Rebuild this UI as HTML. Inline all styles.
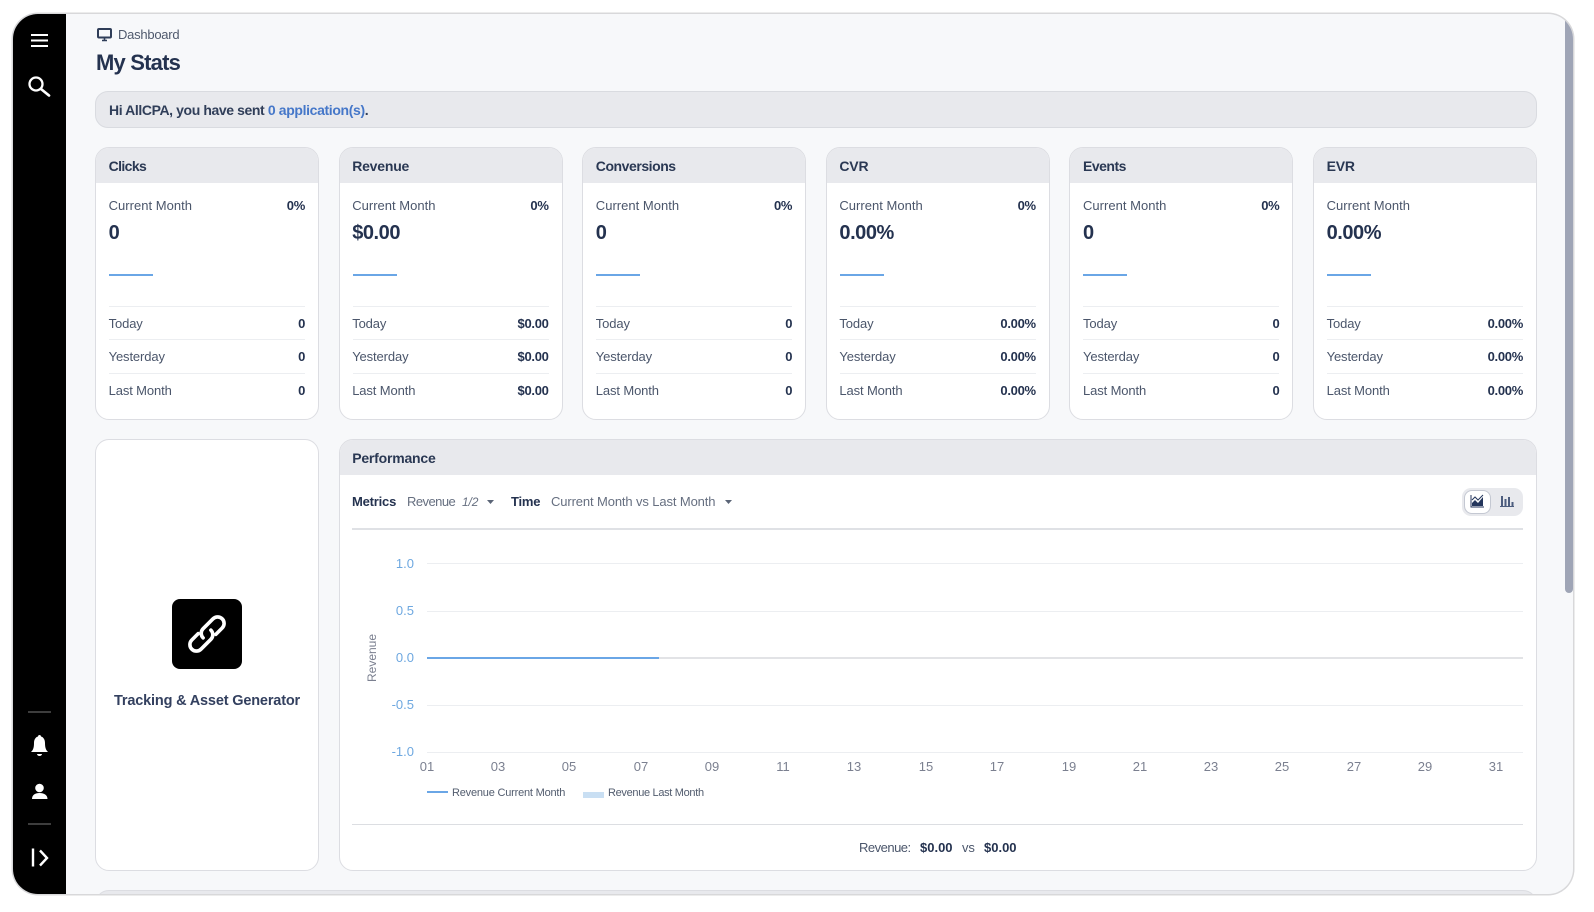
<!DOCTYPE html>
<html lang="en">
<head>
<meta charset="utf-8">
<title>My Stats</title>
<style>
*{box-sizing:border-box;margin:0;padding:0}
html,body{width:1594px;height:912px;background:#fff;overflow:hidden;font-family:"Liberation Sans",sans-serif;color:#24324f}
.frame{position:absolute;left:13px;top:14px;width:1560px;height:880px;border-radius:25px;overflow:hidden;background:#f7f8fa;box-shadow:0 0 0 1.5px #d8d8da}
.in{position:absolute;left:-13px;top:-14px;width:1594px;height:912px;filter:blur(.25px)}
.a{position:absolute;white-space:nowrap}
.side{position:absolute;left:0;top:0;width:66px;height:912px;background:#000}
.sb{position:absolute;left:1565px;top:0;width:8px;height:593px;background:#9fa5b6;border-radius:0 0 4px 4px}
.alert{position:absolute;left:95px;top:91px;width:1442px;height:37px;background:#e8e9ed;border:1px solid #d9dbe0;border-radius:13px}
.card{position:absolute;top:147px;width:224px;height:273px;background:#fff;border:1px solid #dcdde2;border-radius:14px;overflow:hidden}
.hd{position:absolute;left:0;top:0;right:0;height:35px;background:#e8e9ed}
.t{position:absolute;left:12.6px;top:9px;font-size:14px;line-height:18px;font-weight:700;letter-spacing:-.2px;color:#2a3853}
.l{position:absolute;left:12.6px;font-size:13px;line-height:16px;letter-spacing:-.12px;color:#4b566b;white-space:nowrap}
.l.c{letter-spacing:.02px;top:50px}
.r{position:absolute;right:13px;font-size:13px;line-height:16px;font-weight:700;letter-spacing:-.3px;color:#24324f;white-space:nowrap}
.v{position:absolute;left:12.6px;top:74px;font-size:20px;line-height:22px;font-weight:700;letter-spacing:-.45px;color:#24324f}
.sp{position:absolute;left:13px;top:126px;width:44px;height:2px;background:#6aa6e6}
.d{position:absolute;left:13px;right:13px;height:1px;background:#eceef1}
.tile{position:absolute;left:95px;top:439px;width:224px;height:432px;background:#fff;border:1px solid #dcdde2;border-radius:14px}
.perf{position:absolute;left:338.6px;top:439px;width:1198.4px;height:432px;background:#fff;border:1px solid #dcdde2;border-radius:14px;overflow:hidden}
.g{position:absolute;left:427px;width:1096px;height:1px;background:#eceef1}
.y{position:absolute;left:374px;width:40px;text-align:right;font-size:13px;line-height:16px;color:#6ea8e0}
.x{position:absolute;top:759px;width:30px;text-align:center;font-size:13px;line-height:16px;color:#7b8090}
.f{font-size:13px;line-height:16px;color:#666f80;letter-spacing:-.12px}
.b{font-size:13px;line-height:16px;font-weight:700;color:#24324f;letter-spacing:-.2px}
.lg{font-size:11px;line-height:14px;color:#525c6e;letter-spacing:-.2px}
</style>
</head>
<body>
<div class="frame"><div class="in">

<div class="side"></div>
<svg class="a" style="left:0;top:0" width="66" height="912" fill="none" stroke="#fff">
  <path d="M31 35h17M31 40.5h17M31 46h17" stroke-width="2"/>
  <circle cx="36" cy="84" r="6.5" stroke-width="2.3"/>
  <path d="M41 89l8 6.5" stroke-width="2.7" stroke-linecap="round"/>
  <path d="M28 712h23M28 824h23" stroke="#7a7a7a" stroke-width="1"/>
  <path d="M31 752c2-2 3-4 3-9 0-4 2-6 4-6.500 0-2 3-2 3 0 2 .5 4 2.500 4 6.500 0 5 1 7 3 9z" fill="#fff" stroke="none"/>
  <path d="M37 754h5a2.500 2 0 0 1-5 0z" fill="#fff" stroke="none"/>
  <circle cx="39.500" cy="788" r="4.300" fill="#fff" stroke="none"/>
  <path d="M32 799c0-4 3-6 7.500-6s8 2 8 6z" fill="#fff" stroke="none"/>
  <path d="M33 848.500v18" stroke-width="2.400"/>
  <path d="M40 850.500l7 7.500-7 7.500" stroke-width="2.400"/>
</svg>

<div class="sb"></div>

<svg class="a" style="left:97px;top:28px" width="16" height="14" viewBox="0 0 16 14" fill="none">
  <rect x="1" y="1" width="13" height="8.500" rx="1" stroke="#2f3d58" stroke-width="2"/>
  <path d="M5 12.500h5M7.500 10v2" stroke="#2f3d58" stroke-width="1.600"/>
</svg>
<div class="a" style="left:118px;top:27px;font-size:13px;line-height:16px;letter-spacing:-.25px;color:#4f596d">Dashboard</div>
<div class="a" style="left:96px;top:50px;font-size:22px;line-height:26px;font-weight:700;letter-spacing:-.8px;color:#24324f">My Stats</div>

<div class="alert"></div>
<div class="a" style="left:109px;top:101px;font-size:14px;line-height:18px;font-weight:700;letter-spacing:-.4px;color:#303e59">Hi AllCPA, you have sent <span style="color:#4577c9;letter-spacing:-.36px">0 application(s)</span>.</div>

<div class="card" style="left:95px"><div class="hd"></div><div class="t" style="letter-spacing:-.6px">Clicks</div>
<div class="l c">Current Month</div><div class="r" style="top:50px">0%</div><div class="v">0</div><div class="sp"></div>
<div class="d" style="top:158px"></div><div class="l" style="top:168px">Today</div><div class="r" style="top:168px">0</div>
<div class="d" style="top:191px"></div><div class="l" style="top:201px">Yesterday</div><div class="r" style="top:201px">0</div>
<div class="d" style="top:225px"></div><div class="l" style="top:235px">Last Month</div><div class="r" style="top:235px">0</div></div>

<div class="card" style="left:338.6px"><div class="hd"></div><div class="t">Revenue</div>
<div class="l c">Current Month</div><div class="r" style="top:50px">0%</div><div class="v">$0.00</div><div class="sp"></div>
<div class="d" style="top:158px"></div><div class="l" style="top:168px">Today</div><div class="r" style="top:168px">$0.00</div>
<div class="d" style="top:191px"></div><div class="l" style="top:201px">Yesterday</div><div class="r" style="top:201px">$0.00</div>
<div class="d" style="top:225px"></div><div class="l" style="top:235px">Last Month</div><div class="r" style="top:235px">$0.00</div></div>

<div class="card" style="left:582.2px"><div class="hd"></div><div class="t" style="letter-spacing:-.45px">Conversions</div>
<div class="l c">Current Month</div><div class="r" style="top:50px">0%</div><div class="v">0</div><div class="sp"></div>
<div class="d" style="top:158px"></div><div class="l" style="top:168px">Today</div><div class="r" style="top:168px">0</div>
<div class="d" style="top:191px"></div><div class="l" style="top:201px">Yesterday</div><div class="r" style="top:201px">0</div>
<div class="d" style="top:225px"></div><div class="l" style="top:235px">Last Month</div><div class="r" style="top:235px">0</div></div>

<div class="card" style="left:825.8px"><div class="hd"></div><div class="t">CVR</div>
<div class="l c">Current Month</div><div class="r" style="top:50px">0%</div><div class="v">0.00%</div><div class="sp"></div>
<div class="d" style="top:158px"></div><div class="l" style="top:168px">Today</div><div class="r" style="top:168px">0.00%</div>
<div class="d" style="top:191px"></div><div class="l" style="top:201px">Yesterday</div><div class="r" style="top:201px">0.00%</div>
<div class="d" style="top:225px"></div><div class="l" style="top:235px">Last Month</div><div class="r" style="top:235px">0.00%</div></div>

<div class="card" style="left:1069.4px"><div class="hd"></div><div class="t" style="letter-spacing:-.5px">Events</div>
<div class="l c">Current Month</div><div class="r" style="top:50px">0%</div><div class="v">0</div><div class="sp"></div>
<div class="d" style="top:158px"></div><div class="l" style="top:168px">Today</div><div class="r" style="top:168px">0</div>
<div class="d" style="top:191px"></div><div class="l" style="top:201px">Yesterday</div><div class="r" style="top:201px">0</div>
<div class="d" style="top:225px"></div><div class="l" style="top:235px">Last Month</div><div class="r" style="top:235px">0</div></div>

<div class="card" style="left:1313px"><div class="hd"></div><div class="t">EVR</div>
<div class="l c">Current Month</div><div class="v">0.00%</div><div class="sp"></div>
<div class="d" style="top:158px"></div><div class="l" style="top:168px">Today</div><div class="r" style="top:168px">0.00%</div>
<div class="d" style="top:191px"></div><div class="l" style="top:201px">Yesterday</div><div class="r" style="top:201px">0.00%</div>
<div class="d" style="top:225px"></div><div class="l" style="top:235px">Last Month</div><div class="r" style="top:235px">0.00%</div></div>

<div class="tile"></div>
<div class="a" style="left:172px;top:599px;width:70px;height:70px;background:#000;border-radius:8px"></div>
<svg class="a" style="left:177px;top:604px" width="60" height="60" viewBox="-30 -30 60 60" fill="none" stroke="#fff" stroke-width="3.600" stroke-linecap="round">
  <g transform="rotate(-45)">
    <path d="M6 6.500H15a6.500 6.500 0 0 0 0-13H1a6.500 6.500 0 0 0-6.500 6.500"/>
    <path d="M6 6.500H15a6.500 6.500 0 0 0 0-13H1a6.500 6.500 0 0 0-6.500 6.500" transform="rotate(180)"/>
  </g>
</svg>
<div class="a" style="left:95px;width:224px;top:692px;text-align:center;font-size:14.500px;line-height:18px;font-weight:700;letter-spacing:-.17px;color:#33405f">Tracking &amp; Asset Generator</div>

<div class="perf"><div class="hd"></div><div class="t">Performance</div></div>

<div class="a b" style="left:352px;top:494px">Metrics</div>
<div class="a f" style="left:407px;top:494px;letter-spacing:-.55px">Revenue</div>
<div class="a f" style="left:462px;top:494px;font-style:italic;font-size:12px">1/2</div>
<svg class="a" style="left:487px;top:500px" width="7" height="4"><path d="M0 0h7L3.500 4z" fill="#5b6577"/></svg>
<div class="a b" style="left:511px;top:494px">Time</div>
<div class="a f" style="left:551px;top:494px">Current Month vs Last Month</div>
<svg class="a" style="left:725px;top:500px" width="7" height="4"><path d="M0 0h7L3.500 4z" fill="#5b6577"/></svg>

<div class="a" style="left:1462px;top:488px;width:61px;height:28px;background:#e8e9ed;border-radius:9px"></div>
<div class="a" style="left:1464px;top:490px;width:27px;height:24px;background:#fff;border:1px solid #c4c8d2;border-radius:8px"></div>
<svg class="a" style="left:1470px;top:494px" width="15" height="14" viewBox="0 0 15 14" fill="none">
  <path d="M1 1v12h13" stroke="#24365c" stroke-width="1"/>
  <path d="M2 12V9l3-3 3 3 5-6v9z" fill="#24365c"/>
  <path d="M2 6l3-3 3 3 5-5" stroke="#24365c" stroke-width="1"/>
</svg>
<svg class="a" style="left:1500px;top:494px" width="14" height="14" viewBox="0 0 14 14" fill="#4d5d7e">
  <rect x="1" y="2" width="2" height="10"/><rect x="4.500" y="5" width="2" height="7"/><rect x="8" y="3" width="2" height="9"/><rect x="11.500" y="8" width="2" height="4"/><rect x="0" y="12" width="14" height="1"/>
</svg>

<div class="a" style="left:352px;top:528px;width:1171px;height:1.500px;background:#dfe1e5"></div>

<div class="g" style="top:563px"></div>
<div class="g" style="top:611px"></div>
<div class="g" style="top:657px;height:2px;background:#e2e3e6"></div>
<div class="g" style="top:705px"></div>
<div class="g" style="top:752px"></div>
<div class="a" style="left:427px;top:657px;width:232px;height:2px;background:#6aa6e6"></div>

<div class="y" style="top:556px">1.0</div>
<div class="y" style="top:603px">0.5</div>
<div class="y" style="top:650px">0.0</div>
<div class="y" style="top:697px">-0.5</div>
<div class="y" style="top:744px">-1.0</div>

<div class="a" style="left:372px;top:658px;transform:translate(-50%,-50%) rotate(-90deg);font-size:12px;line-height:14px;color:#7b8090">Revenue</div>

<div class="x" style="left:412px">01</div>
<div class="x" style="left:483px">03</div>
<div class="x" style="left:554px">05</div>
<div class="x" style="left:626px">07</div>
<div class="x" style="left:697px">09</div>
<div class="x" style="left:768px">11</div>
<div class="x" style="left:839px">13</div>
<div class="x" style="left:911px">15</div>
<div class="x" style="left:982px">17</div>
<div class="x" style="left:1054px">19</div>
<div class="x" style="left:1125px">21</div>
<div class="x" style="left:1196px">23</div>
<div class="x" style="left:1267px">25</div>
<div class="x" style="left:1339px">27</div>
<div class="x" style="left:1410px">29</div>
<div class="x" style="left:1481px">31</div>

<div class="a" style="left:427px;top:790.500px;width:21px;height:2.500px;background:#6aa6e6"></div>
<div class="a lg" style="left:452px;top:786px">Revenue Current Month</div>
<div class="a" style="left:583px;top:792px;width:21px;height:6px;background:#c9dff3"></div>
<div class="a lg" style="left:608px;top:786px;letter-spacing:-.32px">Revenue Last Month</div>

<div class="a" style="left:352px;top:824px;width:1171px;height:1px;background:#dcdee2"></div>
<div class="a f" style="left:859px;top:840px;color:#4b566b;letter-spacing:-.5px">Revenue:</div>
<div class="a b" style="left:920px;top:840px;letter-spacing:0">$0.00</div>
<div class="a f" style="left:962px;top:840px;color:#4b566b">vs</div>
<div class="a b" style="left:984px;top:840px;letter-spacing:0">$0.00</div>

<div class="a" style="left:95px;top:890px;width:1442px;height:30px;background:#e8e9ed;border:1px solid #dcdde2;border-radius:14px"></div>

</div></div>
</body>
</html>
